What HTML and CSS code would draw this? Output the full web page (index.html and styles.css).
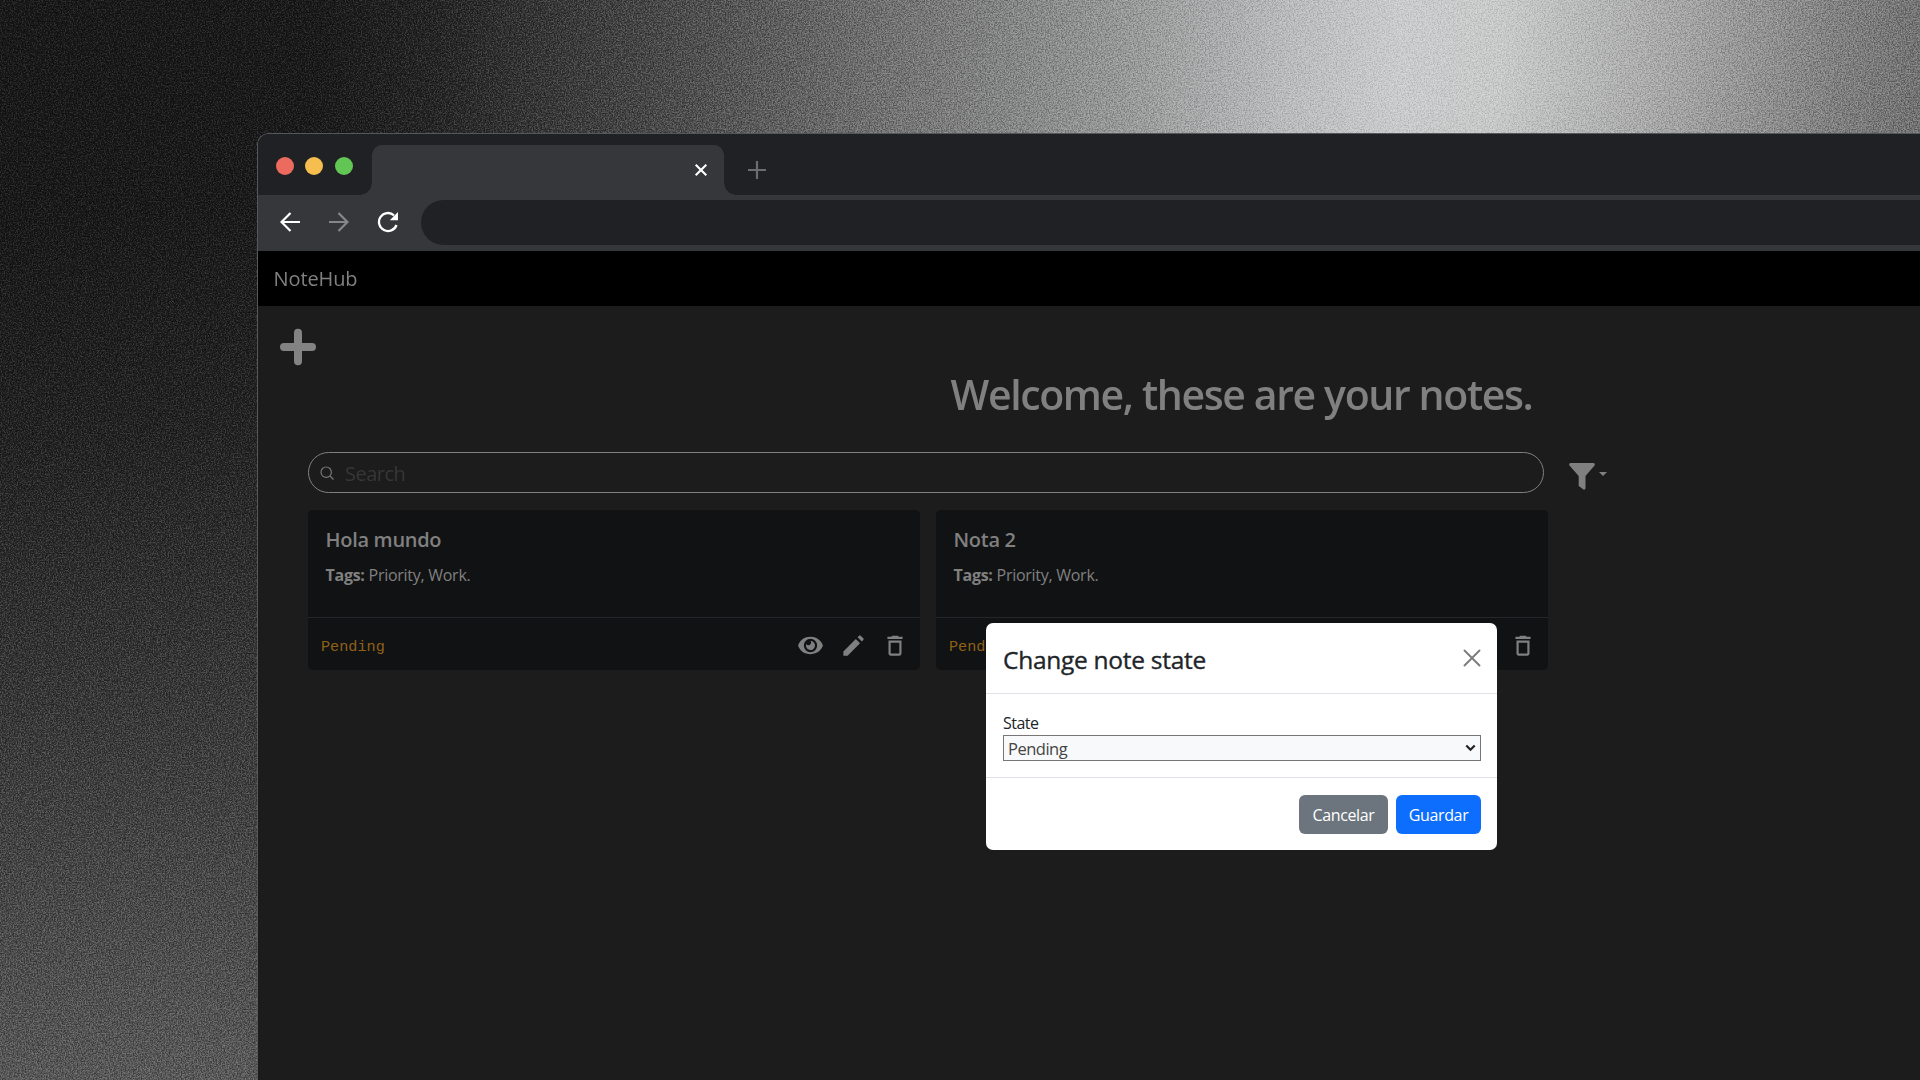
FILE: index.html
```html
<!DOCTYPE html>
<html lang="en">
<head>
<meta charset="utf-8">
<title>NoteHub</title>
<link rel="stylesheet" href="styles.css">
</head>
<body>
<div class="desktop">
  <svg class="grain" aria-hidden="true">
    <filter id="noise" x="0" y="0" width="100%" height="100%" color-interpolation-filters="sRGB">
      <feTurbulence type="fractalNoise" baseFrequency="0.75" numOctaves="2" seed="4"/>
      <feColorMatrix type="matrix" values="2.4 0 0 0 -0.7  2.4 0 0 0 -0.7  2.4 0 0 0 -0.7  0 0 0 0 1"/>
    </filter>
    <rect width="100%" height="100%" filter="url(#noise)"/>
  </svg>
  <main class="window">
    <header class="tabstrip">
      <div class="lights"><i class="red"></i><i class="yellow"></i><i class="green"></i></div>
      <div class="tab">
        <svg width="14" height="14" viewBox="0 0 14 14"><path d="M1.700 1.700l10.600 10.600M12.300 1.700L1.700 12.300" stroke="#fff" stroke-width="2.100"/></svg>
      </div>
      <svg class="newtab" width="18" height="18" viewBox="0 0 18 18"><path d="M9 0v18M0 9h18" stroke="#6c6d71" stroke-width="2.200"/></svg>
    </header>
    <div class="toolbar">
      <svg width="20" height="20" viewBox="0 0 20 20" fill="none" stroke="#fff" stroke-width="2.200"><path d="M20 10H2M10.500 1L1.500 10l9 9"/></svg>
      <svg width="20" height="20" viewBox="0 0 20 20" fill="none" stroke="#86878b" stroke-width="2.200"><path d="M0 10h18M9.500 1l9 9-9 9"/></svg>
      <svg width="22" height="22" viewBox="0 0 22 22"><path d="M19.500 14A9 9 0 1 1 17 4.300" fill="none" stroke="#fff" stroke-width="2.300"/><path d="M21 1v8.200h-8.200z" fill="#fff"/></svg>
      <div class="address"></div>
    </div>
    <nav class="navbar">NoteHub</nav>
    <section class="page">
      <svg class="add" width="38" height="38" viewBox="0 0 38 38"><path d="M19 4.800v28.400M5 19h28" stroke="#838383" stroke-width="8" stroke-linecap="round"/></svg>
      <h1>Welcome, these are your notes.</h1>
      <div class="searchrow">
        <label class="search">
          <svg width="14" height="14" viewBox="0 0 14 14" fill="none" stroke="#777" stroke-width="1.200"><circle cx="6.200" cy="6.200" r="5.200"/><path d="M10 10l3.500 3.500"/></svg>
          <span>Search</span>
        </label>
        <svg class="filter" width="26" height="27" viewBox="0 0 26 27"><path d="M1.200 0h23.600q1.700 1 .7 2.600L16.500 13v12.500q-.5 1.500-2 1L9.700 23V13L.5 2.600Q-.5 1 1.200 0z" fill="#808080"/></svg>
        <svg class="caret" width="8" height="4" viewBox="0 0 8 4"><path d="M0 0h8L4 4z" fill="#808080"/></svg>
      </div>
      <div class="cards">
        <article class="card">
          <div class="body"><h2>Hola mundo</h2><p><b>Tags:</b> Priority, Work.</p></div>
          <footer>
            <code>Pending</code>
            <svg width="29" height="29" viewBox="0 0 24 24"><use href="#eye"/></svg>
            <svg width="27" height="27" viewBox="0 0 24 24"><use href="#pencil"/></svg>
            <svg width="26" height="26" viewBox="0 0 24 24"><use href="#trash"/></svg>
          </footer>
        </article>
        <article class="card">
          <div class="body"><h2>Nota 2</h2><p><b>Tags:</b> Priority, Work.</p></div>
          <footer>
            <code>Pending</code>
            <svg width="26" height="26" viewBox="0 0 24 24"><use href="#trash"/></svg>
          </footer>
        </article>
      </div>
    </section>
  </main>
  <section class="modal">
    <header><h3>Change note state</h3>
      <svg width="18" height="18" viewBox="0 0 18 18"><path d="M1.500 1.500l15 15M16.500 1.500l-15 15" stroke="#7c7c7c" stroke-width="1.900" stroke-linecap="round"/></svg>
    </header>
    <div class="field">
      <span class="label">State</span>
      <div class="select"><span>Pending</span>
        <svg width="11" height="8" viewBox="0 0 11 8"><path d="M1.300 1.500l4.200 4.200 4.200-4.200" fill="none" stroke="#222" stroke-width="2.200"/></svg>
      </div>
    </div>
    <footer><button class="cancel">Cancelar</button><button class="save">Guardar</button></footer>
  </section>
  <svg width="0" height="0" class="defs">
    <symbol id="eye" viewBox="0 0 24 24"><path fill="#808080" fill-rule="evenodd" d="M12 4.800C7 4.800 3.400 7.500 1.700 12c1.700 4.500 5.300 7.200 10.300 7.200s8.600-2.700 10.300-7.200C20.600 7.500 17 4.800 12 4.800zM12 6.500a5.500 5.500 0 1 1 0 11 5.500 5.500 0 0 1 0-11zM12 8.300a3.700 3.700 0 1 1-3.500 2.500A1.900 1.900 0 0 0 12 8.300z"/></symbol>
    <symbol id="pencil" viewBox="0 0 24 24"><path fill="#808080" d="M3 17.250V21h3.750L17.810 9.940l-3.750-3.750L3 17.250zM20.710 7.040a1 1 0 0 0 0-1.410l-2.340-2.340a1 1 0 0 0-1.410 0l-1.330 1.330 3.750 3.750 1.330-1.330z"/></symbol>
    <symbol id="trash" viewBox="0 0 24 24"><path fill="#808080" fill-rule="evenodd" d="M15.500 3.500l-1-1h-5l-1 1H5v2h14v-2zM6 7v12c0 1.100.9 2 2 2h8c1.100 0 2-.9 2-2V7zM8 9h8v10H8z"/></symbol>
  </svg>
</div>
</body>
</html>
```
FILE: styles.css
```css
* { box-sizing: border-box; }
body { margin: 0; font-family: "Open Sans", "Noto Sans", sans-serif; }
h1, h2, h3, p { margin: 0; }
svg { flex: none; display: block; }

.desktop {
  position: relative;
  width: 1920px;
  height: 1080px;
  padding: 133px 0 0 257px;
  overflow: hidden;
  background:
    linear-gradient(175deg, rgba(98, 98, 98, 0) 220px, rgba(98, 98, 98, .12) 440px, rgba(98, 98, 98, .42) 720px, rgba(98, 98, 98, 1) 1200px),
    linear-gradient(94deg, #181818 0, #191919 320px, #242424 440px, #444 640px, #707070 880px, #989999 1130px, #bbbcbd 1290px, #cbcccd 1400px, #c9caca 1500px, #a6a6a6 1680px, #808080 1840px, #6c6c6c 1960px);
}
.grain { position: absolute; inset: 0; width: 100%; height: 100%; mix-blend-mode: soft-light; opacity: .5; }
.defs { position: absolute; }

.window {
  position: relative;
  width: 1663px;
  height: 947px;
  border: solid #55575a;
  border-width: 1px 0 0 1px;
  border-radius: 12px 0 0 0;
  overflow: hidden;
  background: #1c1c1c;
}
.tabstrip { display: flex; height: 61px; background: #202124; }
.lights { display: flex; gap: 11.300px; width: 114px; padding: 22.500px 0 0 18px; }
.lights i { width: 18px; height: 18px; border-radius: 50%; }
.red { background: #ed6a5f; }
.yellow { background: #f6be4f; }
.green { background: #62c655; }
.tab {
  position: relative;
  display: flex;
  justify-content: flex-end;
  width: 352px;
  height: 50px;
  margin-top: 11px;
  padding: 18px 16px 0 0;
  border-radius: 10px 10px 0 0;
  background: #36373a;
}
.tab::before, .tab::after { content: ""; position: absolute; bottom: 0; width: 12px; height: 12px; }
.tab::before { left: -12px; background: radial-gradient(circle at 0 0, transparent 11.500px, #36373a 12px); }
.tab::after { right: -12px; background: radial-gradient(circle at 100% 0, transparent 11.500px, #36373a 12px); }
.newtab { margin: 27px 0 0 24px; }
.toolbar { display: flex; align-items: center; gap: 28.500px; height: 56px; padding: 0 0 2px 22px; background: #36373a; }
.address { flex: 1; height: 45px; margin-left: -7px; border-radius: 23px 0 0 23px; background: #202124; }
.navbar { height: 55px; padding-left: 15.500px; font-size: 20px; line-height: 55px; letter-spacing: -.1px; color: #808080; background: #000; }

.page { padding-top: 22px; }
.add { margin-left: 21px; }
h1 { width: 590px; margin: 0 0 0 692.500px; font-size: 41px; line-height: 56px; font-weight: 600; letter-spacing: -1.370px; color: #808080; white-space: nowrap; }
.searchrow { display: flex; margin: 30px 0 0 50px; }
.search { display: flex; align-items: center; gap: 11px; width: 1236px; height: 41px; padding-left: 11px; border: 1px solid #808080; border-radius: 21px; font-size: 20px; letter-spacing: -.500px; color: #373737; }
.search span { position: relative; top: 1px; }
.filter { margin: 11px 0 0 25px; }
.caret { margin: 20px 0 0 4px; }
.cards { display: flex; gap: 16px; margin: 17px 0 0 50px; }
.card { width: 612px; height: 160px; border-radius: 5px; background: #111213; color: #808080; }
.body { height: 108px; padding: 16px 18px 0 17.500px; border-bottom: 1px solid #242729; }
h2 { font-size: 20px; line-height: 28px; font-weight: 600; letter-spacing: -.300px; }
p { margin-top: 10px; font-size: 16px; line-height: 22px; letter-spacing: -.270px; white-space: nowrap; }
.card footer { display: flex; align-items: center; gap: 15px; height: 52px; padding: 3px 12px 0 13px; }
code { margin-right: auto; padding-top: 2px; font: 15.200px "Liberation Mono", monospace; color: #8e6118; }

.modal { position: absolute; left: 986px; top: 623px; width: 511px; height: 227px; border-radius: 7px; background: #fff; color: #212529; }
.modal header { display: flex; align-items: center; justify-content: space-between; height: 71px; padding: 0 16px 0 17px; border-bottom: 1px solid #dee2e6; }
h3 { padding-top: 3px; font-size: 24.500px; line-height: 34px; font-weight: 500; letter-spacing: -.280px; white-space: nowrap; -webkit-text-stroke: .35px; }
.field { height: 84px; padding: 18px 16px 0 17px; border-bottom: 1px solid #dee2e6; }
.label { display: block; height: 23px; font-size: 16px; line-height: 23px; letter-spacing: -.500px; }
.select { display: flex; align-items: center; justify-content: space-between; height: 26px; padding: 0 4px 0 4px; border: 1px solid #767676; background: #f8f9fa; font-size: 16.500px; letter-spacing: -.500px; color: #444; }
.modal footer { display: flex; justify-content: flex-end; gap: 8px; padding: 17px 16px; }
button { height: 39px; padding: 0; border: 0; border-radius: 6px; font: 16px "Open Sans", sans-serif; letter-spacing: -.350px; color: #fff; }
.cancel { width: 89px; background: #6c757d; }
.save { width: 85px; background: #0d6efd; }
```
